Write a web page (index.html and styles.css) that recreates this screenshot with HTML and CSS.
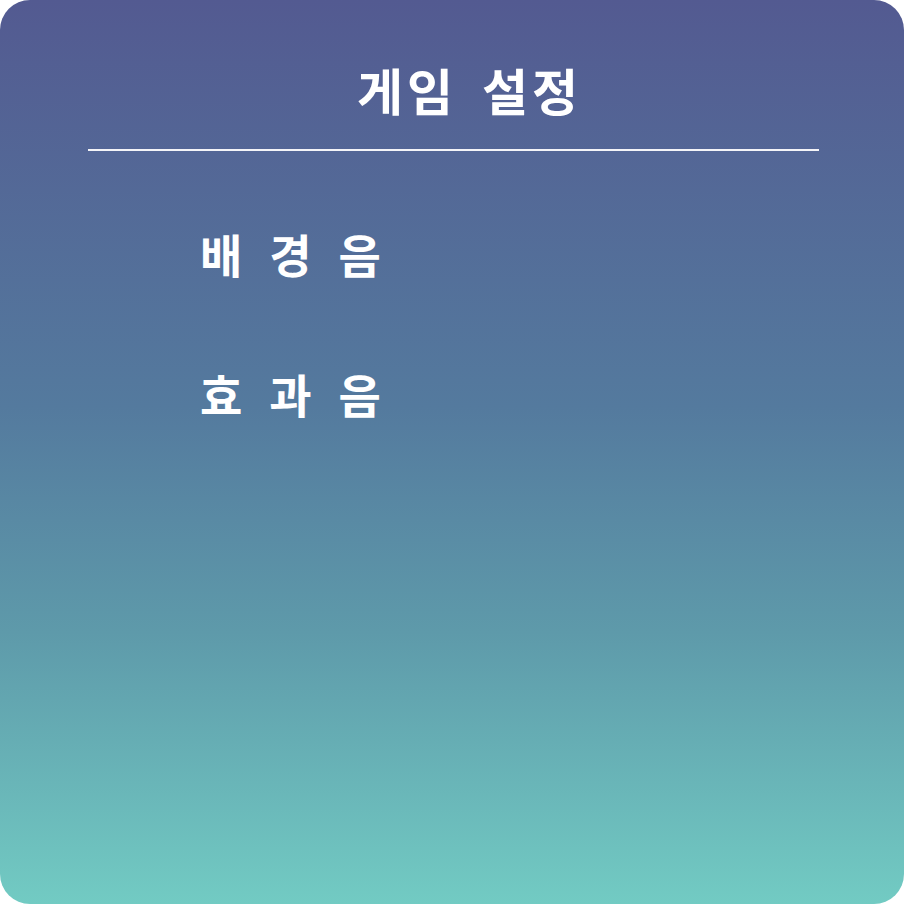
FILE: index.html
```html
<!DOCTYPE html>
<html lang="ko">
<head>
<meta charset="utf-8">
<link rel="stylesheet" href="styles.css">
</head>
<body>
<div class="card">
  <h1 class="title">게임 설정</h1>
  <div class="divider"></div>
  <ul class="options">
    <li class="option">배 경 음</li>
    <li class="option">효 과 음</li>
  </ul>
</div>
</body>
</html>
```
FILE: styles.css
```css
html, body {
  margin: 0;
  padding: 0;
  background: #ffffff;
}
.card {
  width: 904px;
  height: 904px;
  box-sizing: border-box;
  border-radius: 30px;
  background: linear-gradient(to bottom, #535a91 0%, #547a9e 45%, #5e9aaa 70%, #72cbc3 100%);
  display: flex;
  flex-direction: column;
  font-family: "Noto Sans CJK KR", "Noto Sans", sans-serif;
  color: #ffffff;
  padding: 0 85px 0 88px;
}
.title {
  margin: 0;
  padding-top: 64px;
  padding-left: 32px;
  height: 149px;
  flex: none;
  box-sizing: border-box;
  font-size: 50px;
  font-weight: 700;
  line-height: 1;
  letter-spacing: 4px;
  word-spacing: 7px;
  text-align: center;
}
.divider {
  flex: none;
  height: 2px;
  background: #f4f4f8;
  width: 731px;
}
.options {
  list-style: none;
  margin: 0;
  padding: 0 0 0 112px;
  display: flex;
  flex-direction: column;
  gap: 92px;
  margin-top: 78px;
}
.option {
  font-size: 46px;
  font-weight: 700;
  line-height: 48px;
  letter-spacing: 7px;
}
```
